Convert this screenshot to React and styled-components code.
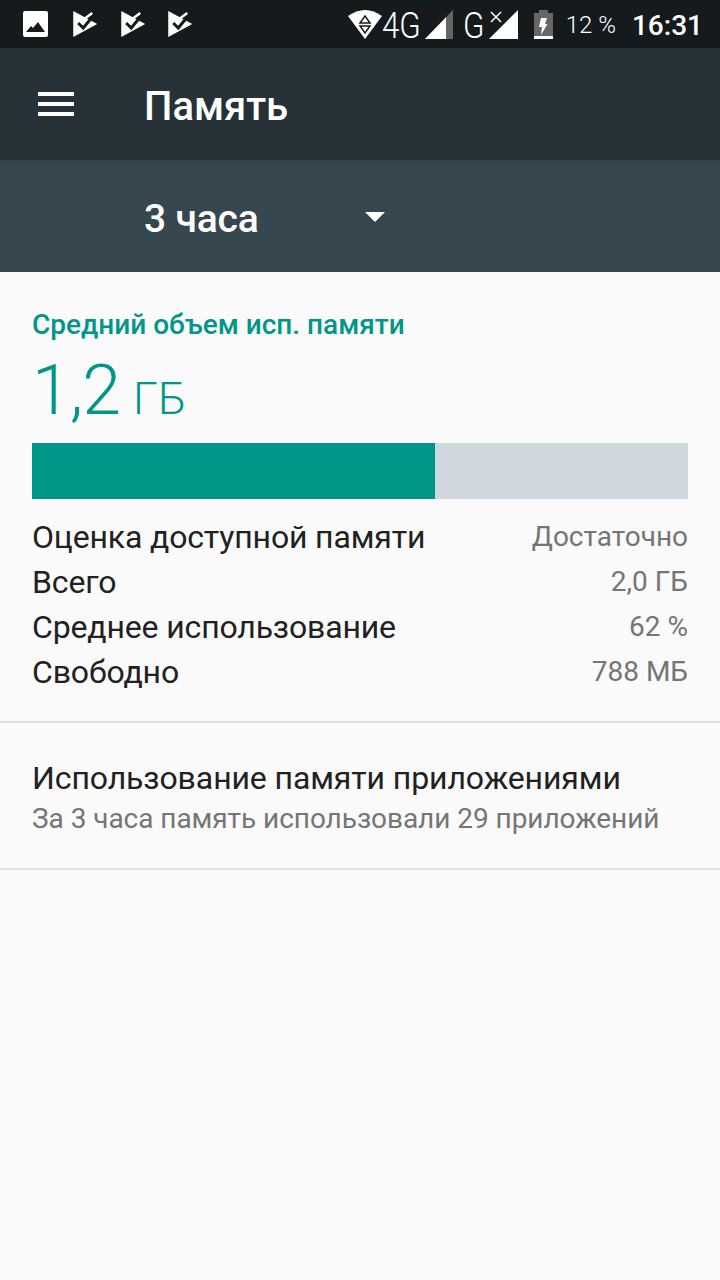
import React from "react";
import styled, { createGlobalStyle } from "styled-components";

const GlobalStyle = createGlobalStyle`
    html, body {
        margin: 0;
        padding: 0;
        background-color: #fafafa;
        font-family: Roboto, "Noto Sans", sans-serif;
    }
`;

const Page = styled.div`
    width: 720px;
    height: 1280px;
    overflow: hidden;
    display: flex;
    flex-direction: column;
    background-color: #fafafa;
`;

const StatusBar = styled.div`
    height: 48px;
    flex: none;
    background-color: #151a1d;
    display: flex;
    align-items: center;
    padding: 0 17px 0 23px;
    color: #fff;
`;
const NotifIcons = styled.div`
    display: flex;
    align-items: center;
    gap: 22px;
`;
const ImageSvg = styled.svg`
    margin-right: 3px;
`;
const StatusRight = styled.div`
    margin-left: auto;
    display: flex;
    align-items: center;
    height: 48px;
`;
const NetLabel = styled.span`
    display: block;
    width: ${(p) => p.$width}px;
    margin-left: ${(p) => p.$left}px;
    margin-top: 3px;
    font-size: 36px;
    font-weight: 300;
    line-height: 48px;
    transform: scaleX(0.87);
    transform-origin: left center;
    white-space: nowrap;
`;
const Percent = styled.span`
    font-size: 24px;
    font-weight: 300;
    margin-left: 13px;
    margin-top: 2px;
`;
const Clock = styled.span`
    font-size: 28px;
    font-weight: 500;
    margin-left: 16px;
    margin-top: 2px;
`;
const Gap = styled.span`
    width: ${(p) => p.$width}px;
`;

const AppBar = styled.header`
    height: 112px;
    flex: none;
    background-color: #263238;
    display: flex;
    align-items: center;
    box-sizing: border-box;
    padding: 0 0 0 38px;
    color: #fff;
    box-shadow: 0 2px 6px rgba(0, 0, 0, 0.15);
    z-index: 1;
`;
const Title = styled.h1`
    margin: 4px 0 0 70px;
    font-size: 40px;
    font-weight: 500;
`;

const SpinnerBar = styled.div`
    height: 112px;
    flex: none;
    background-color: #37474f;
    display: flex;
    align-items: center;
    box-sizing: border-box;
    padding: 6px 0 0 144px;
    color: #fff;
`;
const SpinnerValue = styled.span`
    font-size: 39px;
    font-weight: 500;
    letter-spacing: -0.2px;
    width: 221px;
`;
const Caret = styled.div`
    width: 0;
    height: 0;
    margin-top: -4px;
    border-left: 10px solid transparent;
    border-right: 10px solid transparent;
    border-top: 10px solid #fff;
`;

const Summary = styled.section`
    padding: 36px 32px 27px;
    border-bottom: 2px solid #e0e0e0;
`;
const SummaryLabel = styled.div`
    color: #009688;
    font-size: 28px;
    font-weight: 500;
    line-height: 34px;
`;
const BigValue = styled.div`
    color: #009688;
    font-size: 70px;
    font-weight: 300;
    letter-spacing: -1px;
    line-height: 84px;
    margin-top: 6px;
`;
const BigUnit = styled.span`
    font-size: 45px;
    letter-spacing: 0;
    margin-left: 13px;
`;
const Bar = styled.div`
    height: 56px;
    background-color: #cfd8dc;
    margin-top: 2px;
    margin-bottom: 15px;
`;
const BarFill = styled.div`
    height: 100%;
    background-color: #009688;
`;
const StatRow = styled.div`
    display: flex;
    justify-content: space-between;
    align-items: center;
    height: 45px;
    font-size: 32px;
    letter-spacing: -0.15px;
    color: #212121;
`;
const StatValue = styled.span`
    font-size: 28px;
    letter-spacing: 0;
    color: #757575;
`;

const AppUsage = styled.section`
    padding: 35px 32px 29px;
    border-bottom: 2px solid #e0e0e0;
`;
const UsageTitle = styled.div`
    font-size: 32px;
    letter-spacing: -0.1px;
    color: #212121;
    line-height: 41px;
`;
const UsageSub = styled.div`
    font-size: 28px;
    letter-spacing: -0.05px;
    color: #757575;
    line-height: 40px;
`;

const ImageIcon = () => (
  <ImageSvg width="25" height="26" viewBox="0 0 25 26">
    <rect width="25" height="26" rx="2" fill="#fff" />
    <path d="M3 21l5-6 2 2 5-6 7 10z" fill="#151a1d" />
  </ImageSvg>
);

const CheckFlag = () => (
  <svg width="25.5" height="26" viewBox="0 0 25 26">
    <path d="M0 0l24 13L0 26z" fill="#fff" />
    <path d="M5 12l5 5 9-11" fill="none" stroke="#151a1d" strokeWidth="3" />
    <path d="M11 8l8-6" fill="none" stroke="#fff" strokeWidth="2.5" />
  </svg>
);

const WifiIcon = () => (
  <svg width="34" height="29" viewBox="0 0 34 29">
    <path d="M0 6Q17-6 34 6L17 29z" fill="#fff" />
    <path d="M17 6l5 7H12zM12 16h10l-5 7z" fill="none" stroke="#151a1d" strokeWidth="1.5" />
  </svg>
);

const Signal = () => (
  <svg width="28" height="29" viewBox="0 0 28 29">
    <path d="M0 29L28 0v29z" fill="#666" />
    <path d="M0 29L21 7.3V29z" fill="#fff" />
  </svg>
);

const NoDataSignal = () => (
  <svg width="29" height="29" viewBox="0 0 29 29">
    <path d="M0 29L29 0v29z" fill="#fff" />
    <path d="M2 2l10 10M12 2L2 12" stroke="#fff" strokeWidth="1.5" />
  </svg>
);

const BatteryIcon = () => (
  <svg width="19" height="29" viewBox="0 0 19 29">
    <path d="M5 0h9v3h5v23H0V3h5z" fill="#666" />
    <path d="M0 26h19v3H0z" fill="#fff" />
    <path d="M7 8h6l-2 6h2.5L7 25l1-8H5z" fill="#fff" />
  </svg>
);

const stats = [
  ["Оценка доступной памяти", "Достаточно"],
  ["Всего", "2,0 ГБ"],
  ["Среднее использование", "62 %"],
  ["Свободно", "788 МБ"],
];

const App = () => {
  return (
    <Page>
      <GlobalStyle />
      <StatusBar>
        <NotifIcons>
          <ImageIcon />
          <CheckFlag />
          <CheckFlag />
          <CheckFlag />
        </NotifIcons>
        <StatusRight>
          <WifiIcon />
          <NetLabel $width={37} $left={0}>4G</NetLabel>
          <Gap $width={6} />
          <Signal />
          <NetLabel $width={19} $left={10}>G</NetLabel>
          <Gap $width={7} />
          <NoDataSignal />
          <Gap $width={16} />
          <BatteryIcon />
          <Percent>12 %</Percent>
          <Clock>16:31</Clock>
        </StatusRight>
      </StatusBar>
      <AppBar>
        <svg width="36" height="24" viewBox="0 0 36 24">
          <path d="M0 0h36v4H0zM0 10h36v4H0zM0 20h36v4H0z" fill="#fff" />
        </svg>
        <Title>Память</Title>
      </AppBar>
      <SpinnerBar>
        <SpinnerValue>3 часа</SpinnerValue>
        <Caret />
      </SpinnerBar>
      <Summary>
        <SummaryLabel>Средний объем исп. памяти</SummaryLabel>
        <BigValue>1,2<BigUnit>ГБ</BigUnit></BigValue>
        <Bar>
          <BarFill style={{ width: `${(403 / 656) * 100}%` }} />
        </Bar>
        {stats.map(([label, value]) => (
          <StatRow key={label}>
            <span>{label}</span>
            <StatValue>{value}</StatValue>
          </StatRow>
        ))}
      </Summary>
      <AppUsage>
        <UsageTitle>Использование памяти приложениями</UsageTitle>
        <UsageSub>За 3 часа память использовали 29 приложений</UsageSub>
      </AppUsage>
    </Page>
  );
};

export default App;
